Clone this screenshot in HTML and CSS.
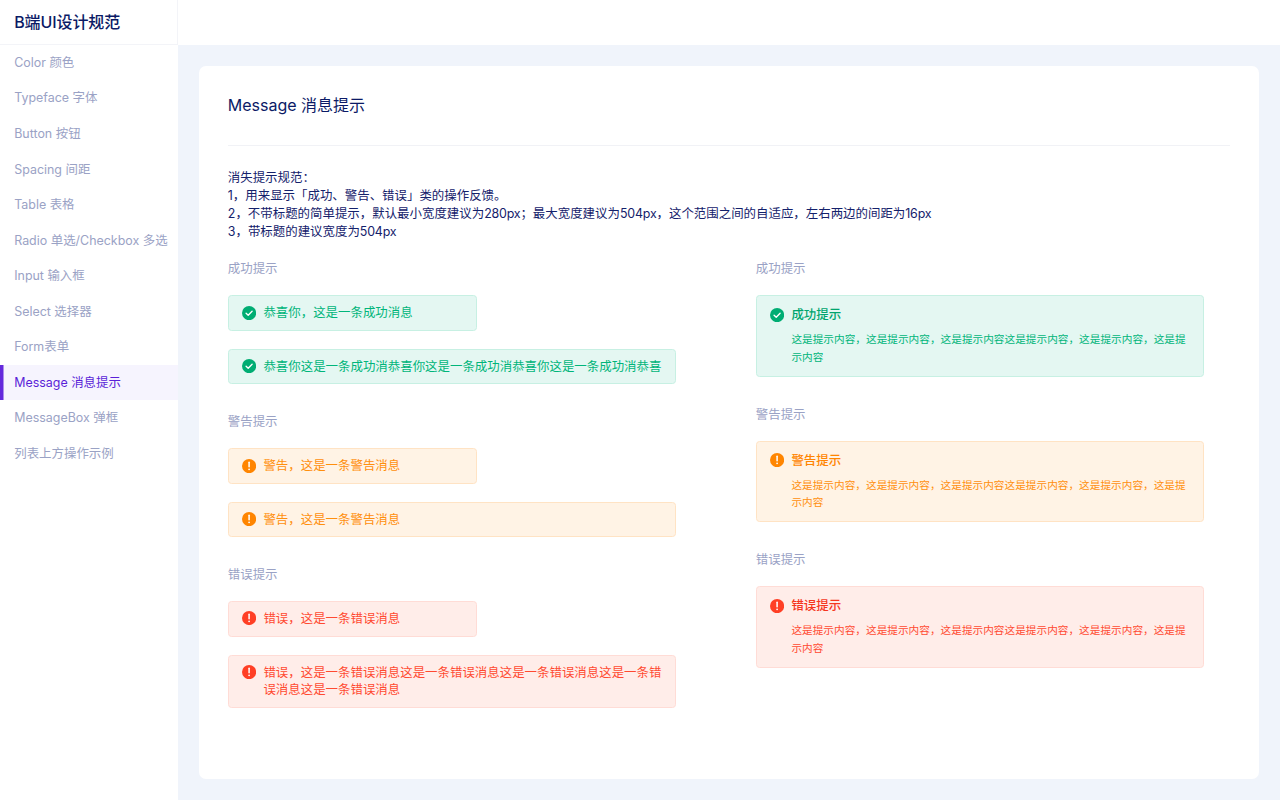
FILE: index.html
```html
<!DOCTYPE html>
<html lang="zh-CN">
<head>
<meta charset="utf-8">
<title>B端UI设计规范</title>
<link rel="stylesheet" href="styles.css">
</head>
<body>
<svg class="defs" width="0" height="0" aria-hidden="true">
  <symbol id="i-ok" viewBox="0 0 16 16"><circle cx="8" cy="8" r="8" fill="currentColor"/><path d="M4.6 8.2l2.4 2.3 4.4-4.6" fill="none" stroke="#fff" stroke-width="1.5" stroke-linecap="round" stroke-linejoin="round"/></symbol>
  <symbol id="i-warn" viewBox="0 0 16 16"><circle cx="8" cy="8" r="8" fill="currentColor"/><path d="M8 3.8v5" fill="none" stroke="#fff" stroke-width="1.7" stroke-linecap="round"/><circle cx="8" cy="11.6" r="1" fill="#fff"/></symbol>
</svg>
<div class="app">
  <aside class="sidebar">
    <div class="brand">B端UI设计规范</div>
    <nav class="nav">
      <a class="nav-item">Color 颜色</a>
      <a class="nav-item">Typeface 字体</a>
      <a class="nav-item">Button 按钮</a>
      <a class="nav-item">Spacing 间距</a>
      <a class="nav-item">Table 表格</a>
      <a class="nav-item">Radio 单选/Checkbox 多选</a>
      <a class="nav-item">Input 输入框</a>
      <a class="nav-item">Select 选择器</a>
      <a class="nav-item">Form表单</a>
      <a class="nav-item active">Message 消息提示</a>
      <a class="nav-item">MessageBox 弹框</a>
      <a class="nav-item">列表上方操作示例</a>
    </nav>
  </aside>
  <div class="right">
    <header class="topbar"></header>
    <main class="main">
      <section class="card">
        <h1 class="card-title">Message 消息提示</h1>
        <div class="intro">
          <p>消失提示规范：</p>
          <p>1，用来显示「成功、警告、错误」类的操作反馈。</p>
          <p>2，不带标题的简单提示，默认最小宽度建议为<span class="num">280px</span>；最大宽度建议为<span class="num">504px</span>，这个范围之间的自适应，左右两边的间距为<span class="num">16px</span></p>
          <p>3，带标题的建议宽度为<span class="num">504px</span></p>
        </div>
        <div class="columns">
          <div class="col">
            <div class="group">
              <div class="label">成功提示</div>
              <div class="alert ok short"><svg class="icon"><use href="#i-ok"/></svg><span>恭喜你，这是一条成功消息</span></div>
              <div class="alert ok"><svg class="icon"><use href="#i-ok"/></svg><span>恭喜你这是一条成功消恭喜你这是一条成功消恭喜你这是一条成功消恭喜</span></div>
            </div>
            <div class="group">
              <div class="label">警告提示</div>
              <div class="alert warn short"><svg class="icon"><use href="#i-warn"/></svg><span>警告，这是一条警告消息</span></div>
              <div class="alert warn"><svg class="icon"><use href="#i-warn"/></svg><span>警告，这是一条警告消息</span></div>
            </div>
            <div class="group">
              <div class="label">错误提示</div>
              <div class="alert err short"><svg class="icon"><use href="#i-warn"/></svg><span>错误，这是一条错误消息</span></div>
              <div class="alert err"><svg class="icon"><use href="#i-warn"/></svg><span>错误，这是一条错误消息这是一条错误消息这是一条错误消息这是一条错误消息这是一条错误消息</span></div>
            </div>
          </div>
          <div class="col">
            <div class="group">
              <div class="label">成功提示</div>
              <div class="alert ok titled"><svg class="icon"><use href="#i-ok"/></svg><div><div class="alert-title">成功提示</div><div class="alert-body">这是提示内容，这是提示内容，这是提示内容这是提示内容，这是提示内容，这是提示内容</div></div></div>
            </div>
            <div class="group">
              <div class="label">警告提示</div>
              <div class="alert warn titled"><svg class="icon"><use href="#i-warn"/></svg><div><div class="alert-title">警告提示</div><div class="alert-body">这是提示内容，这是提示内容，这是提示内容这是提示内容，这是提示内容，这是提示内容</div></div></div>
            </div>
            <div class="group">
              <div class="label">错误提示</div>
              <div class="alert err titled"><svg class="icon"><use href="#i-warn"/></svg><div><div class="alert-title">错误提示</div><div class="alert-body">这是提示内容，这是提示内容，这是提示内容这是提示内容，这是提示内容，这是提示内容</div></div></div>
            </div>
          </div>
        </div>
      </section>
    </main>
  </div>
</div>
</body>
</html>
```
FILE: styles.css
```css
* { box-sizing: border-box; }
html, body { margin: 0; height: 100%; }
body {
  font-family: Inter, "Noto Sans CJK SC", sans-serif;
  font-size: 12.44px;
  line-height: 17.78px;
  color: #14216b;
  background: #f0f4fb;
  overflow: hidden;
}
.defs { position: absolute; }
.app { display: flex; height: 800px; }
.sidebar { width: 178px; flex: none; background: #fff; }
.brand {
  height: 44.5px;
  padding-left: 14.2px;
  font-size: 16px;
  font-weight: 500;
  line-height: 44.5px;
  color: #0b1a66;
  letter-spacing: -.1px;
  border-bottom: 1px solid #f3f4f8;
  border-right: 1px solid #f3f4f8;
}
.nav { padding-top: .4px; }
.nav-item {
  display: block;
  height: 35.56px;
  padding-left: 14.2px;
  line-height: 35.56px;
  color: #9aa2c5;
  white-space: nowrap;
}
.nav-item.active {
  color: #5a1fd8;
  background: #f6f4fe;
  box-shadow: inset 3.5px 0 0 #6429dc;
}
.right { flex: 1; display: flex; flex-direction: column; min-width: 0; }
.topbar { height: 44.5px; flex: none; background: #fff; }
.main { flex: 1; padding: 21.3px; }
.card {
  height: 100%;
  padding: 0 28.5px;
  background: #fff;
  border-radius: 7px;
}
.card-title {
  margin: 0;
  height: 80px;
  font-size: 16px;
  font-weight: 400;
  line-height: 79px;
  color: #0b1a66;
  border-bottom: 1px solid #f1f2f6;
}
.intro { padding-top: 23.4px; }
.intro p { margin: 0; }
.num { letter-spacing: -.2px; }
.columns { display: grid; grid-template-columns: 528px 1fr; margin-top: 19.7px; }
.group { margin-bottom: 28.6px; }
.label { color: #9aa2c5; margin-bottom: 17.4px; }
.alert {
  display: flex;
  align-items: flex-start;
  gap: 7.1px;
  width: 448px;
  padding: 7.89px 13.3px;
  border: 1px solid;
  border-radius: 3.5px;
  margin-top: 18.1px;
}
.label + .alert { margin-top: 0; }
.alert.short { width: 249px; }
.alert.ok { color: #00b57a; background: #e4f7f2; border-color: #c7f0e3; }
.alert.warn { color: #ff8f0d; background: #fff3e5; border-color: #ffe3c4; }
.alert.err { color: #ff4a31; background: #ffede9; border-color: #ffdcd6; }
.icon { width: 14.2px; height: 14.2px; flex: none; margin-top: 1.6px; }
.alert.ok .icon { color: #00ad73; }
.alert.warn .icon { color: #ff8500; }
.alert.err .icon { color: #ff3f25; }
.alert.titled { padding-top: 10px; padding-bottom: 9.34px; }
.alert-title { font-weight: 500; margin-bottom: 7.1px; }
.alert.ok .alert-title { color: #00a56e; }
.alert.warn .alert-title { color: #ff8500; }
.alert.err .alert-title { color: #f5371e; }
.alert-body { font-size: 10.67px; }
```
